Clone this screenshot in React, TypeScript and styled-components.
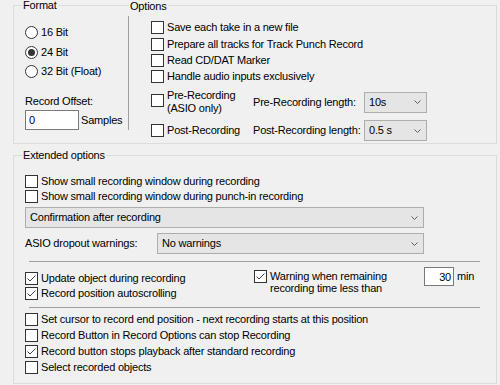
import React from "react";
import styled, { createGlobalStyle } from "styled-components";

const GlobalStyle = createGlobalStyle`
  html, body { margin: 0; padding: 0; background: #f0f0f0; overflow: hidden; }
  body {
    font-family: "Liberation Sans", Arial, sans-serif;
    font-size: 11px;
    line-height: 13px;
    letter-spacing: -0.2px;
    color: #000;
  }
  * { box-sizing: border-box; }
`;

const Page = styled.div`
  width: 500px;
  height: 385px;
  padding: 5px 0 0 13px;
  display: flex;
  flex-direction: column;
  gap: 11px;
`;

const Group = styled.div<{ $height: number }>`
  position: relative;
  width: 484px;
  height: ${(p) => p.$height}px;
  border: 1px solid #dcdcdc;
`;

const TopGroup = styled(Group)`
  display: flex;
  align-items: flex-start;
`;

const ExtendedGroup = styled(Group)`
  display: flex;
  flex-direction: column;
  padding: 18px 0 0 11px;
`;

const Legend = styled.span<{ $top: number; $left: number }>`
  position: absolute;
  top: ${(p) => p.$top}px;
  left: ${(p) => p.$left}px;
  padding: 0 1px;
  background: #f0f0f0;
  white-space: nowrap;
`;

const FormatColumn = styled.div`
  position: relative;
  width: 114px;
  flex-shrink: 0;
  padding: 19px 0 0 11px;
  display: flex;
  flex-direction: column;
`;

const RadioList = styled.div`
  display: flex;
  flex-direction: column;
  gap: 4.5px;
`;

const Row = styled.label`
  display: flex;
  align-items: center;
  gap: 3px;
  height: 15px;
  white-space: nowrap;
`;

const RadioCircle = styled.span<{ $checked?: boolean }>`
  width: 13px;
  height: 13px;
  border: 1px solid #333;
  border-radius: 50%;
  background: #fff;
  flex-shrink: 0;
  display: grid;
  place-items: center;
  &::after {
    content: "";
    display: ${(p) => (p.$checked ? "block" : "none")};
    width: 7px;
    height: 7px;
    border-radius: 50%;
    background: #333;
  }
`;

const OffsetLabel = styled.div`
  margin-top: 16px;
  white-space: nowrap;
`;

const OffsetRow = styled.div`
  display: flex;
  align-items: center;
  gap: 2px;
  margin-top: 2px;
`;

const TextBox = styled.input<{ $w: number; $h: number; $right?: boolean }>`
  width: ${(p) => p.$w}px;
  height: ${(p) => p.$h}px;
  border: 1px solid #7a7a7a;
  background: #fff;
  padding: 0 ${(p) => (p.$right ? "2px" : "3px")};
  margin: 0;
  font: inherit;
  letter-spacing: inherit;
  color: #000;
  text-align: ${(p) => (p.$right ? "right" : "left")};
  outline: none;
  flex-shrink: 0;
`;

const VRule = styled.div`
  width: 1px;
  height: 114px;
  margin-top: 10px;
  background: #a0a0a0;
  flex-shrink: 0;
`;

const OptionsColumn = styled.div`
  position: relative;
  flex: 1;
  padding: 14px 0 0 22px;
  display: flex;
  flex-direction: column;
`;

const CheckList = styled.div<{ $gap: number; $firstExtra?: number }>`
  display: flex;
  flex-direction: column;
  gap: ${(p) => p.$gap}px;
  & > :first-child {
    margin-bottom: ${(p) => p.$firstExtra ?? 0}px;
  }
`;

const BoxEl = styled.span<{ $top?: number }>`
  width: 13px;
  height: 13px;
  border: 1px solid #333;
  background: #fff;
  flex-shrink: 0;
  display: block;
  margin-top: ${(p) => p.$top ?? 0}px;
  svg { display: block; }
`;

const RecGrid = styled.div`
  display: grid;
  grid-template-columns: 102px 111px 63px;
  grid-template-rows: 26px 21px;
  row-gap: 5px;
  align-items: center;
  margin-top: 5px;
`;

const TallRow = styled.label`
  display: flex;
  align-items: flex-start;
  gap: 3px;
  height: 26px;
`;

const Lines = styled.span<{ $lh: number; $w?: number; $top?: number; $left?: number }>`
  line-height: ${(p) => p.$lh}px;
  width: ${(p) => (p.$w ? `${p.$w}px` : "auto")};
  margin-top: ${(p) => p.$top ?? 0}px;
  margin-left: ${(p) => p.$left ?? 0}px;
  flex-shrink: 0;
  white-space: nowrap;
`;

const Plain = styled.span`
  white-space: nowrap;
`;

const ComboEl = styled.div<{ $w: number }>`
  width: ${(p) => p.$w}px;
  height: 21px;
  border: 1px solid #adadad;
  background: #e5e5e5;
  display: flex;
  align-items: center;
  justify-content: space-between;
  padding: 0 5px 0 4px;
  white-space: nowrap;
  flex-shrink: 0;
`;

const Combo1 = styled.div`
  margin-top: 3px;
`;

const AsioRow = styled.div`
  display: flex;
  align-items: center;
  margin-top: 5px;
`;

const AsioLabel = styled.span`
  width: 132px;
  white-space: nowrap;
`;

const HRule = styled.div<{ $top: number }>`
  width: 451px;
  height: 1px;
  margin: ${(p) => p.$top}px 0 0 4px;
  background: #a0a0a0;
`;

const WarnSection = styled.div`
  display: flex;
  align-items: flex-start;
  margin-top: 5px;
`;

const LeftCol = styled.div`
  width: 229px;
  padding-top: 4px;
  display: flex;
  flex-direction: column;
`;

const WarnBlock = styled.label`
  display: flex;
  align-items: flex-start;
`;

const Unit = styled.span`
  margin: 3px 0 0 3px;
`;

const BottomList = styled.div`
  margin-top: 4px;
`;

const Check = ({ checked, top }: { checked?: boolean; top?: number }) => (
  <BoxEl $top={top}>
    {checked && (
      <svg width="11" height="11" viewBox="0 0 11 11">
        <path d="M1.5 5.5 L4 8 L9.5 2.5" fill="none" stroke="#444" strokeWidth="1" />
      </svg>
    )}
  </BoxEl>
);

const Combo = ({ w, value }: { w: number; value: string }) => (
  <ComboEl $w={w}>
    <span>{value}</span>
    <svg width="7" height="4" viewBox="0 0 7 4">
      <path d="M0.5 0.5 L3.5 3.5 L6.5 0.5" fill="none" stroke="#606060" strokeWidth="1" />
    </svg>
  </ComboEl>
);

const CheckItem = ({ label, checked }: { label: string; checked?: boolean }) => (
  <Row>
    <Check checked={checked} />
    <span>{label}</span>
  </Row>
);

export default function App() {
  return (
    <>
      <GlobalStyle />
      <Page>
        <TopGroup $height={139}>
          <FormatColumn>
            <Legend $top={-7} $left={8}>Format</Legend>
            <RadioList>
              <Row>
                <RadioCircle />
                <span>16 Bit</span>
              </Row>
              <Row>
                <RadioCircle $checked />
                <span>24 Bit</span>
              </Row>
              <Row>
                <RadioCircle />
                <span>32 Bit (Float)</span>
              </Row>
            </RadioList>
            <OffsetLabel>Record Offset:</OffsetLabel>
            <OffsetRow>
              <TextBox $w={54} $h={20} defaultValue="0" readOnly />
              <Plain>Samples</Plain>
            </OffsetRow>
          </FormatColumn>
          <VRule />
          <OptionsColumn>
            <Legend $top={-6} $left={0}>Options</Legend>
            <CheckList $gap={1} $firstExtra={1}>
              <CheckItem label="Save each take in a new file" />
              <CheckItem label="Prepare all tracks for Track Punch Record" />
              <CheckItem label="Read CD/DAT Marker" />
              <CheckItem label="Handle audio inputs exclusively" />
            </CheckList>
            <RecGrid>
              <TallRow>
                <Check top={5} />
                <Lines $lh={13}>
                  Pre-Recording
                  <br />
                  (ASIO only)
                </Lines>
              </TallRow>
              <Plain>Pre-Recording length:</Plain>
              <Combo w={63} value="10s" />
              <Row>
                <Check />
                <span>Post-Recording</span>
              </Row>
              <Plain>Post-Recording length:</Plain>
              <Combo w={63} value="0.5 s" />
            </RecGrid>
          </OptionsColumn>
        </TopGroup>

        <ExtendedGroup $height={229}>
          <Legend $top={-7} $left={8}>Extended options</Legend>
          <CheckList $gap={0}>
            <CheckItem label="Show small recording window during recording" />
            <CheckItem label="Show small recording window during punch-in recording" />
          </CheckList>
          <Combo1>
            <Combo w={399} value="Confirmation after recording" />
          </Combo1>
          <AsioRow>
            <AsioLabel>ASIO dropout warnings:</AsioLabel>
            <Combo w={267} value="No warnings" />
          </AsioRow>
          <HRule $top={7} />
          <WarnSection>
            <LeftCol>
              <CheckItem label="Update object during recording" checked />
              <CheckItem label="Record position autoscrolling" checked />
            </LeftCol>
            <WarnBlock>
              <Check checked top={3} />
              <Lines $lh={12} $w={154} $top={3} $left={3}>
                Warning when remaining
                <br />
                recording time less than
              </Lines>
              <TextBox $w={30} $h={19} $right defaultValue="30" readOnly />
              <Unit>min</Unit>
            </WarnBlock>
          </WarnSection>
          <HRule $top={6} />
          <BottomList>
            <CheckList $gap={1}>
              <CheckItem label="Set cursor to record end position - next recording starts at this position" />
              <CheckItem label="Record Button in Record Options can stop Recording" />
              <CheckItem label="Record button stops playback after standard recording" checked />
              <CheckItem label="Select recorded objects" />
            </CheckList>
          </BottomList>
        </ExtendedGroup>
      </Page>
    </>
  );
}
